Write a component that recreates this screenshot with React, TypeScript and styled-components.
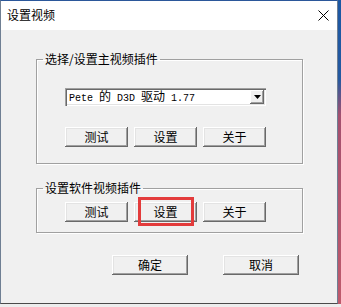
import React from "react";
import styled, { createGlobalStyle } from "styled-components";

const GlobalStyle = createGlobalStyle`
  html, body {
    margin: 0;
    padding: 0;
  }
  body {
    font-family: "Noto Sans CJK SC", "Microsoft YaHei", sans-serif;
    font-size: 12px;
    color: #000;
  }
`;

const Screen = styled.div`
  width: 341px;
  height: 307px;
  display: grid;
  grid-template-columns: 338px 1fr;
  grid-template-rows: 304px 1fr;
  overflow: hidden;
`;

const Desktop = styled.div`
  background: linear-gradient(180deg, #1c58a4 0%, #2459a0 26%, #a4506f 38%, #bf5a6c 100%);
`;

const Strip = styled.div`
  grid-column: 1 / span 2;
  background: #ededed;
`;

const Window = styled.div`
  box-sizing: border-box;
  border: 1px solid #6f7f93;
  border-top-color: #2b579a;
  border-bottom-color: #4a4a4a;
  background: #f0f0f0;
  display: flex;
  flex-direction: column;
`;

const TitleBar = styled.div`
  height: 29px;
  background: #fff;
  display: flex;
  align-items: center;
  justify-content: space-between;
  padding: 0 8px 0 6px;
`;

const Title = styled.span`
  font-size: 12px;
  line-height: 16px;
  margin-top: -2px;
`;

const Body = styled.div`
  padding: 21px 0 0 35px;
  display: flex;
  flex-direction: column;
`;

const Group = styled.fieldset<{ $gap?: number }>`
  box-sizing: border-box;
  width: 267px;
  margin: ${(p) => p.$gap ?? 0}px 0 0 0;
  padding: 0;
  border: 1px solid #a0a0a0;
  box-shadow: 1px 1px 0 #fff, inset 1px 1px 0 #fff;
  min-inline-size: 0;
`;

const Legend = styled.legend`
  margin-left: 6px;
  padding: 0 2px;
  font-size: 12px;
  line-height: 16px;
`;

const GroupInner = styled.div<{ $pad: string }>`
  padding: ${(p) => p.$pad};
  display: flex;
  flex-direction: column;
`;

const Combo = styled.div`
  box-sizing: border-box;
  width: 201px;
  height: 18px;
  background: #fff;
  box-shadow: inset 1px 1px #a0a0a0, inset 2px 2px #696969, inset -1px -1px #fff,
    inset -2px -2px #e3e3e3;
  display: flex;
  align-items: center;
  justify-content: space-between;
  padding: 2px 2px 2px 4px;
`;

const ComboText = styled.span`
  font-family: "Liberation Mono", "Noto Sans CJK SC", monospace;
  font-size: 10px;
  line-height: 14px;
  white-space: pre;
`;

const Cjk = styled.span`
  font-family: "Noto Sans CJK SC", sans-serif;
  font-size: 12px;
`;

const DropButton = styled.span`
  box-sizing: border-box;
  width: 14px;
  height: 14px;
  background: #f0f0f0;
  box-shadow: inset -1px -1px #696969, inset 1px 1px #fff, inset -2px -2px #a0a0a0;
  display: flex;
  align-items: center;
  justify-content: center;
`;

const Row = styled.div<{ $top?: number }>`
  display: flex;
  gap: 6px;
  margin-top: ${(p) => p.$top ?? 0}px;
`;

const Button = styled.button<{ $w?: number }>`
  position: relative;
  box-sizing: border-box;
  width: ${(p) => p.$w ?? 63}px;
  height: 20px;
  margin: 0;
  padding: 0;
  border: none;
  background: #f0f0f0;
  box-shadow: inset -1px -1px #696969, inset 1px 1px #fff, inset -2px -2px #a0a0a0,
    inset 2px 2px #e3e3e3;
  font-family: "Noto Sans CJK SC", sans-serif;
  font-size: 12px;
  line-height: 18px;
  color: #000;
`;

const Highlight = styled.span`
  position: absolute;
  left: 4px;
  top: -5px;
  width: 56px;
  height: 29px;
  box-sizing: border-box;
  border: 3px solid #e33b3b;
  pointer-events: none;
`;

const Footer = styled.div`
  display: flex;
  gap: 35px;
  padding: 22px 0 0 76px;
`;

const CloseIcon = () => (
  <svg width="11" height="11" viewBox="0 0 11 11">
    <path d="M0.5 0.5 L10.5 10.5 M10.5 0.5 L0.5 10.5" stroke="#000" strokeWidth="1" />
  </svg>
);

const ArrowDown = () => (
  <svg width="7" height="4" viewBox="0 0 7 4">
    <path d="M0 0 H7 L3.5 4 Z" fill="#000" />
  </svg>
);

export default function App() {
  return (
    <>
      <GlobalStyle />
      <Screen>
        <Window>
          <TitleBar>
            <Title>设置视频</Title>
            <CloseIcon />
          </TitleBar>
          <Body>
            <Group>
              <Legend>选择/设置主视频插件</Legend>
              <GroupInner $pad="21px 0 16px 28px">
                <Combo>
                  <ComboText>
                    Pete <Cjk>的</Cjk> D3D <Cjk>驱动</Cjk> 1.77
                  </ComboText>
                  <DropButton>
                    <ArrowDown />
                  </DropButton>
                </Combo>
                <Row $top={21}>
                  <Button>测试</Button>
                  <Button>设置</Button>
                  <Button>关于</Button>
                </Row>
              </GroupInner>
            </Group>
            <Group $gap={16}>
              <Legend>设置软件视频插件</Legend>
              <GroupInner $pad="6px 0 10px 28px">
                <Row>
                  <Button>测试</Button>
                  <Button>
                    设置
                    <Highlight />
                  </Button>
                  <Button>关于</Button>
                </Row>
              </GroupInner>
            </Group>
            <Footer>
              <Button $w={76}>确定</Button>
              <Button $w={76}>取消</Button>
            </Footer>
          </Body>
        </Window>
        <Desktop />
        <Strip />
      </Screen>
    </>
  );
}
